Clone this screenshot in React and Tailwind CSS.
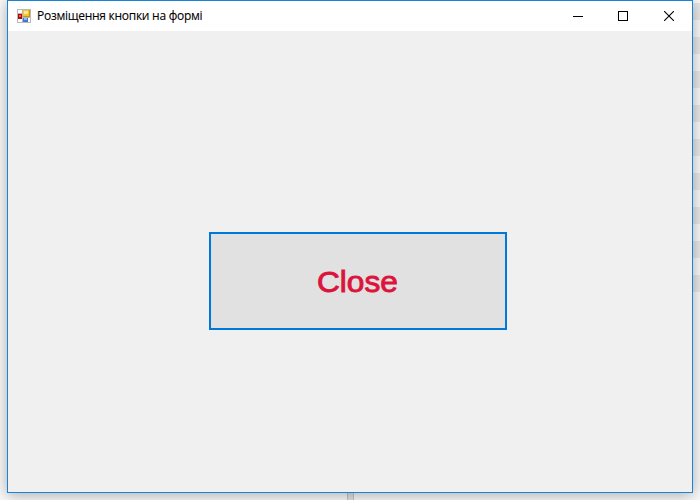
const stripes = Array.from({ length: 17 }, (_, i) => i % 2 === 0);

function FormIcon() {
  return (
    <svg width="14" height="14" viewBox="0 0 14 14" shapeRendering="crispEdges">
      <rect width="14" height="14" fill="#b9b9b9" />
      <rect x="1" y="1" width="4" height="3" fill="#fff" />
      <rect x="1" y="10" width="4" height="3" fill="#fff" />
      <rect x="11" y="9" width="2" height="4" fill="#fff" />
      <rect x="1" y="5" width="4" height="5" fill="#a80c0c" />
      <rect x="2" y="6" width="2" height="2" fill="#e8594f" />
      <rect x="6" y="1" width="7" height="7" fill="#c99410" />
      <rect x="6" y="1" width="6" height="6" fill="#f4c430" />
      <rect x="7" y="2" width="4" height="3" fill="#ffe992" />
      <rect x="6" y="9" width="5" height="4" fill="#3f74d8" />
      <rect x="7" y="9" width="3" height="2" fill="#8db8ff" />
    </svg>
  );
}

function TitleBar() {
  return (
    <header className="flex h-[30px] items-center bg-white pl-[9px]">
      <FormIcon />
      <span className="ml-[6px] flex-1 whitespace-nowrap font-['Open_Sans','Noto_Sans',sans-serif] text-[12px] leading-[16px] tracking-[-0.27px] text-black [-webkit-text-stroke:0.1px_#000]">
        Розміщення кнопки на формі
      </span>
      <div className="flex h-full shrink-0">
        <div className="flex w-[44px] items-center justify-center">
          <svg width="10" height="10" shapeRendering="crispEdges">
            <path d="M0 5.5H10" stroke="#000" />
          </svg>
        </div>
        <div className="flex w-[46px] items-center justify-center">
          <svg width="10" height="10" shapeRendering="crispEdges">
            <rect x=".5" y=".5" width="9" height="9" fill="none" stroke="#000" />
          </svg>
        </div>
        <div className="flex w-[46px] items-center justify-center">
          <svg width="10" height="10">
            <path d="M0 0L10 10M10 0L0 10" stroke="#000" strokeWidth="1.1" />
          </svg>
        </div>
      </div>
    </header>
  );
}

export default function App() {
  return (
    <div className="flex h-[500px] w-[700px] flex-col overflow-hidden bg-[#f9f9f9]">
      <div className="flex h-[493px] pl-[7px]">
        <main className="relative z-10 flex w-[686px] flex-col border border-[#1883d7] bg-[#f0f0f0] shadow-[0_2px_14px_rgba(0,0,0,0.32)]">
          <TitleBar />
          <div className="flex flex-1 pl-[201px] pt-[201px]">
            <button className="flex h-[98px] w-[298px] items-center justify-center border-2 border-[#0078d7] bg-[#e1e1e1] pt-[2px] pr-[2px] font-['Liberation_Sans',sans-serif] text-[30px] leading-[34px] text-[#dc143c] [-webkit-text-stroke:0.9px_#dc143c]">
              <span className="scale-x-[1.055]">Close</span>
            </button>
          </div>
        </main>
        <div className="w-[7px] pt-[3px]">
          {stripes.map((dark, i) => (
            <div key={i} className={dark ? "h-[17px] bg-[#e8e8e8]" : "h-[17px] bg-[#f9f9f9]"} />
          ))}
        </div>
      </div>
      <div className="flex h-[7px] pl-[347px]">
        <div className="w-[7px] border-x border-[#c4c4c4] bg-[#e2e2e2]" />
      </div>
    </div>
  );
}
